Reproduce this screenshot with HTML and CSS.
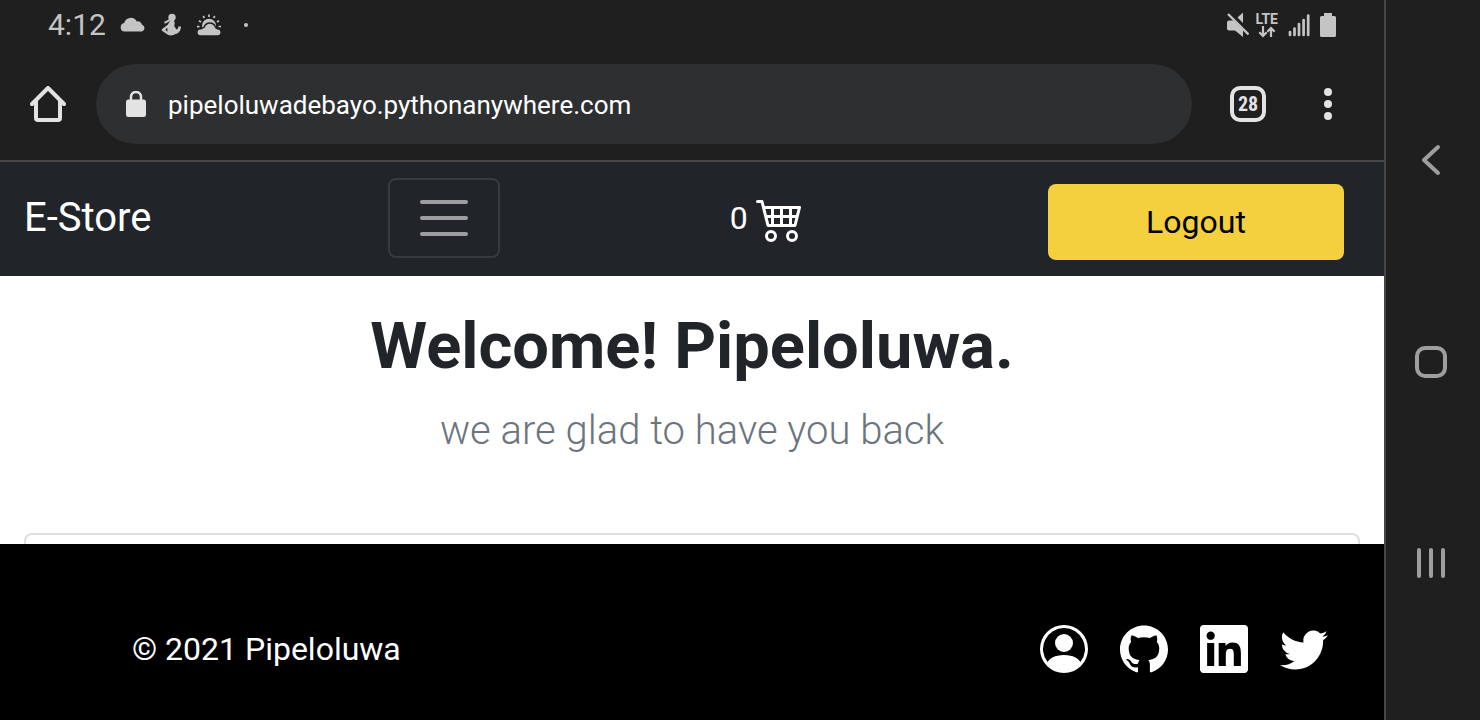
FILE: index.html
```html
<!DOCTYPE html>
<html lang="en">
<head>
<meta charset="utf-8">
<meta name="viewport" content="width=device-width, initial-scale=1">
<title>E-Store</title>
<link rel="stylesheet" href="styles.css">
</head>
<body>
<div class="device">
  <div class="screen">
    <div class="status-bar">
      <div class="status-group status-left">
        <span class="clock">4:12</span>
        <svg width="26" height="24" viewBox="0 0 26 24" fill="currentColor"><path d="M4.500 18.500a4.300 4.300 0 0 1-.3-8.500A6.800 6.800 0 0 1 16.800 8.500a4.300 4.300 0 0 1 5.200 3.300 3.500 3.500 0 0 1 0 6.700z"/></svg>
        <svg width="22" height="24" viewBox="0 0 22 24" fill="currentColor"><circle cx="12" cy="4.500" r="3.700"/><path d="M9.500 8.500 13.500 7l1.300 3-.6 3 2.300 3.500c1.500-.5 1.700-1.500 1.800-3h2.600c.3 4-2.400 7-5.400 7.500-2.500 2-7 2-9.500-.5L2 17.800q-.8-1 .2-1.800L8 11.500zM6.200 15.500l-.7 1.500 1.800 1.800q.3-2-.1-3.800z" fill-rule="evenodd"/><path d="M4.500 9.800 10 6.800" stroke="currentColor" stroke-width="2"/></svg>
        <svg class="weather" width="26" height="24" viewBox="0 0 26 24" fill="currentColor"><path d="M13 1.500v2.400M7.300 3l1 2M18.700 3l-1 2M3 7.800l2 1.200M23 7.800 21 9M1 13.700h2.500M22.500 13.500H25" stroke="currentColor" stroke-width="1.700"/><circle cx="13" cy="12.700" r="7"/><path class="weather-cloud" d="M4.500 22.200a2.900 2.900 0 0 1 0-5.800q2.500.2 4.300-1.800c1.500-5 8.500-5 10 0q.6 1.800 2.700 1.800a2.900 2.900 0 0 1 0 5.800z"/></svg>
        <span class="more-dot"></span>
      </div>
      <div class="status-group status-right">
        <svg width="22" height="26" viewBox="0 0 22 26" fill="currentColor"><path d="M0 10.500Q0 8.500 2 8.500h4.500L16 18v7L8 18.500H2q-2 0-2-2zM16 .5V11l-5.500-5.500z"/><path d="M1 2 21.500 22.500" stroke="currentColor" stroke-width="2.400"/></svg>
        <div class="network">
          <span>LTE</span>
          <svg width="18" height="12" viewBox="0 0 18 12" fill="none" stroke="currentColor" stroke-width="2.200"><path d="M5 0v10M1.300 6.300 5 10l3.700-3.700M13 11V2M9.300 5.700 13 2l3.700 3.700"/></svg>
        </div>
        <svg width="22" height="24" viewBox="0 0 22 24" fill="none" stroke="currentColor" stroke-width="2.700" stroke-linecap="round"><path d="M2 22v-3M6.500 22v-6.500M11 22V11M15.600 22V7M20.200 22V2.500"/></svg>
        <svg width="16" height="24" viewBox="0 0 16 24" fill="currentColor"><path d="M4 0h8v3h2.500Q16 3 16 4.500v18Q16 24 14.500 24h-13Q0 24 0 22.500v-18Q0 3 1.500 3H4z"/></svg>
      </div>
    </div>

    <div class="browser-bar">
      <button class="icon-button" type="button" aria-label="Home"><svg width="36" height="36" viewBox="0 0 36 36" fill="none" stroke="currentColor" stroke-width="4" stroke-linecap="round" stroke-linejoin="round"><path d="M6 15v17q0 2 2 2h20q2 0 2-2V15M2 18 18 2l16 16"/></svg></button>
      <label class="address">
        <svg width="20" height="26" viewBox="0 0 20 26"><path d="M5 10V6a5 5 0 0 1 10 0v4" fill="none" stroke="currentColor" stroke-width="2.500"/><rect y="8.500" width="20" height="17.500" rx="2.500" fill="currentColor"/></svg>
        <input type="text" value="pipeloluwadebayo.pythonanywhere.com" aria-label="Address" spellcheck="false">
      </label>
      <button class="icon-button tabs" type="button" aria-label="28 open tabs"><span>28</span></button>
      <button class="icon-button" type="button" aria-label="Menu"><svg width="8" height="32" viewBox="0 0 8 32" fill="currentColor"><circle cx="4" cy="4" r="4"/><circle cx="4" cy="16" r="4"/><circle cx="4" cy="28" r="4"/></svg></button>
    </div>

    <nav class="navbar">
      <a class="brand" href="#">E-Store</a>
      <button class="toggler" type="button" aria-label="Toggle navigation"><svg width="60" height="60" viewBox="0 0 30 30" fill="none" stroke="currentColor" stroke-width="2" stroke-linecap="round"><path d="M4 7h22M4 15h22M4 23h22"/></svg></button>
      <a class="cart" href="#"><span>0</span><svg width="48" height="48" viewBox="0 0 16 16" fill="currentColor"><path d="M0 2.500A.5.5 0 0 1 .5 2H2a.5.5 0 0 1 .485.379L2.890 4H14.500a.5.5 0 0 1 .485.621l-1.500 6A.5.5 0 0 1 13 11H4a.5.5 0 0 1-.485-.379L1.610 3H.5a.5.5 0 0 1-.5-.5zM3.140 5l.5 2H5V5H3.140zM6 5v2h2V5H6zm3 0v2h2V5H9zm3 0v2h1.360l.5-2H12zm1.110 3H12v2h.61l.5-2zM11 8H9v2h2V8zM8 8H6v2h2V8zM5 8H3.890l.5 2H5V8zm0 5a1 1 0 1 0 0 2 1 1 0 0 0 0-2zm-2 1a2 2 0 1 1 4 0 2 2 0 0 1-4 0zm9-1a1 1 0 1 0 0 2 1 1 0 0 0 0-2zm-2 1a2 2 0 1 1 4 0 2 2 0 0 1-4 0z"/></svg></a>
      <button class="logout" type="button">Logout</button>
    </nav>

    <main class="content">
      <h1>Welcome! Pipeloluwa.</h1>
      <p class="lead">we are glad to have you back</p>
      <section class="card"></section>
    </main>

    <footer class="footer">
      <span>© 2021 Pipeloluwa</span>
      <div class="social">
        <a href="#" aria-label="Profile"><svg width="48" height="48" viewBox="0 0 16 16" fill="currentColor"><path d="M11 6a3 3 0 1 1-6 0 3 3 0 0 1 6 0z"/><path fill-rule="evenodd" d="M0 8a8 8 0 1 1 16 0A8 8 0 0 1 0 8zm8-7a7 7 0 0 0-5.468 11.370C3.242 11.226 4.805 10 8 10s4.757 1.225 5.468 2.370A7 7 0 0 0 8 1z"/></svg></a>
        <a href="#" aria-label="GitHub"><svg width="48" height="48" viewBox="0 0 24 24" fill="currentColor"><path d="M12 .297c-6.630 0-12 5.373-12 12 0 5.303 3.438 9.800 8.205 11.385.6.113.82-.258.82-.577 0-.285-.01-1.040-.015-2.040-3.338.724-4.042-1.610-4.042-1.610C4.422 18.070 3.633 17.700 3.633 17.700c-1.087-.744.084-.729.084-.729 1.205.084 1.838 1.236 1.838 1.236 1.070 1.835 2.809 1.305 3.495.998.108-.776.417-1.305.76-1.605-2.665-.3-5.466-1.332-5.466-5.930 0-1.310.465-2.380 1.235-3.220-.135-.303-.54-1.523.105-3.176 0 0 1.005-.322 3.300 1.230.96-.267 1.980-.399 3-.405 1.020.006 2.040.138 3 .405 2.280-1.552 3.285-1.230 3.285-1.230.645 1.653.24 2.873.12 3.176.765.84 1.230 1.910 1.230 3.220 0 4.610-2.805 5.625-5.475 5.920.42.36.81 1.096.81 2.220 0 1.606-.015 2.896-.015 3.286 0 .315.21.69.825.57C20.565 22.092 24 17.592 24 12.297c0-6.627-5.373-12-12-12"/></svg></a>
        <a href="#" aria-label="LinkedIn"><svg width="48" height="48" viewBox="0 0 24 24" fill="currentColor"><path d="M20.447 20.452h-3.554v-5.569c0-1.328-.027-3.037-1.852-3.037-1.853 0-2.136 1.445-2.136 2.939v5.667H9.351V9h3.414v1.561h.046c.477-.9 1.637-1.850 3.370-1.850 3.601 0 4.267 2.370 4.267 5.455v6.286zM5.337 7.433a2.062 2.062 0 0 1-2.063-2.065 2.064 2.064 0 1 1 2.063 2.065zm1.782 13.019H3.555V9h3.564v11.452zM22.225 0H1.771C.792 0 0 .774 0 1.729v20.542C0 23.227.792 24 1.771 24h20.451C23.200 24 24 23.227 24 22.271V1.729C24 .774 23.200 0 22.222 0h.003z"/></svg></a>
        <a href="#" aria-label="Twitter"><svg width="48" height="48" viewBox="0 0 24 24" fill="currentColor"><path transform="translate(0 .5)" d="M23.954 4.569a10 10 0 0 1-2.825.775 4.958 4.958 0 0 0 2.163-2.723c-.951.555-2.005.959-3.127 1.184a4.920 4.920 0 0 0-8.384 4.482C7.691 8.094 4.066 6.130 1.640 3.161a4.822 4.822 0 0 0-.666 2.475c0 1.710.87 3.213 2.188 4.096a4.904 4.904 0 0 1-2.228-.616v.061a4.923 4.923 0 0 0 3.946 4.827 4.996 4.996 0 0 1-2.212.085 4.937 4.937 0 0 0 4.604 3.417 9.868 9.868 0 0 1-6.102 2.105c-.39 0-.779-.023-1.170-.067a13.995 13.995 0 0 0 7.557 2.209c9.054 0 13.999-7.496 13.999-13.986 0-.209 0-.42-.015-.63a9.936 9.936 0 0 0 2.460-2.548l-.047-.02z"/></svg></a>
      </div>
    </footer>
  </div>

  <div class="system-nav">
    <button class="icon-button" type="button" aria-label="Back"><svg width="32" height="32" viewBox="0 0 32 32" fill="none" stroke="currentColor" stroke-width="4" stroke-linecap="round" stroke-linejoin="round"><path d="M23 3 9 16l14 13"/></svg></button>
    <button class="icon-button" type="button" aria-label="Home screen"><svg width="32" height="32" viewBox="0 0 32 32" fill="none" stroke="currentColor" stroke-width="4"><rect x="2" y="2" width="28" height="28" rx="8"/></svg></button>
    <button class="icon-button" type="button" aria-label="Recent apps"><svg width="32" height="32" viewBox="0 0 32 32" fill="none" stroke="currentColor" stroke-width="4" stroke-linecap="round"><path d="M4 3v26M16 3v26M28 3v26"/></svg></button>
  </div>
</div>
</body>
</html>
```
FILE: styles.css
```css
* {
  box-sizing: border-box;
}

body {
  margin: 0;
  font-family: Roboto, "Liberation Sans", sans-serif;
  font-size: 32px;
  line-height: 48px;
  color: #212529;
  background: #1f1f1f;
}

svg {
  display: block;
  flex: none;
}

a {
  color: inherit;
  text-decoration: none;
}

button,
input {
  font: inherit;
  color: inherit;
}

.device {
  display: flex;
  height: 100vh;
}

.screen {
  display: flex;
  flex: 1;
  flex-direction: column;
  min-width: 0;
}

.status-bar {
  display: flex;
  justify-content: space-between;
  padding: 0 48px;
  color: #c4c4c4;
  background: #1f1f1f;
}

.status-group {
  display: flex;
  align-items: center;
  height: 50px;
}

.status-left {
  gap: 14px;
}

.status-right {
  gap: 10px;
}

.clock {
  font-size: 30px;
}

.weather-cloud {
  stroke: #1f1f1f;
  stroke-width: 3px;
  paint-order: stroke;
}

.more-dot {
  width: 4px;
  height: 4px;
  margin-left: 8px;
  border-radius: 50%;
  background: currentColor;
}

.network {
  display: flex;
  flex-direction: column;
  align-items: center;
  margin-left: -4px;
  font-size: 14px;
  font-weight: 700;
  line-height: 14px;
}

.browser-bar {
  display: flex;
  align-items: center;
  padding: 14px 16px 16px 0;
  color: #e3e3e3;
  background: #1f1f1f;
  border-bottom: 2px solid #474747;
}

.icon-button {
  display: flex;
  align-items: center;
  justify-content: center;
  flex: none;
  width: 80px;
  height: 80px;
  padding: 0;
  border: 0;
  background: none;
}

.browser-bar .icon-button:first-child {
  width: 96px;
}

.address {
  display: flex;
  flex: 1;
  align-items: center;
  gap: 22px;
  min-width: 0;
  height: 80px;
  margin-right: 16px;
  padding: 0 30px;
  border-radius: 40px;
  background: #2e2f31;
}

.address input {
  flex: 1;
  min-width: 0;
  padding: 2px 0 0;
  border: 0;
  outline: 0;
  font-size: 26px;
  color: #fff;
  background: none;
}

.tabs span {
  width: 36px;
  height: 36px;
  border: 4px solid currentColor;
  border-radius: 10px;
  font-family: "Roboto Condensed", Roboto, sans-serif;
  font-size: 20px;
  font-weight: 700;
  line-height: 28px;
}

.navbar {
  display: flex;
  align-items: center;
  justify-content: space-between;
  padding: 16px 40px 18px 24px;
  color: #fff;
  background: #212529;
}

.brand {
  margin-right: 6px;
  font-size: 40px;
}

.toggler {
  display: flex;
  align-items: center;
  justify-content: center;
  width: 112px;
  height: 80px;
  padding: 0;
  border: 2px solid #373b3e;
  border-radius: 8px;
  color: #9b9d9e;
  background: none;
}

.cart {
  display: flex;
  align-items: center;
  gap: 8px;
  margin-right: 14px;
}

.logout {
  align-self: flex-end;
  width: 296px;
  height: 76px;
  margin-bottom: -2px;
  padding: 0;
  border: 0;
  border-radius: 8px;
  color: #000;
  background: #f4d03f;
}

.content {
  flex: 1;
  min-height: 0;
  padding: 32px 24px 0;
  overflow: hidden;
  text-align: center;
  background: #fff;
}

.content h1 {
  margin: 0 0 17px;
  font-size: 65px;
  font-weight: 700;
  line-height: 76px;
}

.lead {
  margin: 0 0 72px;
  font-size: 40px;
  font-weight: 300;
  line-height: 60px;
  color: #6c757d;
}

.card {
  height: 200px;
  border: 2px solid #dfdfdf;
  border-radius: 8px;
}

.footer {
  display: flex;
  align-items: center;
  justify-content: space-between;
  flex: none;
  padding: 81px 56px 47px 132px;
  color: #fff;
  background: #000;
}

.social {
  display: flex;
  gap: 32px;
}

.system-nav {
  display: flex;
  flex: none;
  flex-direction: column;
  align-items: center;
  justify-content: space-between;
  width: 96px;
  padding: 120px 6px 117px 2px;
  border-left: 2px solid #474747;
  color: #9e9e9e;
  background: #1f1f1f;
}
```
